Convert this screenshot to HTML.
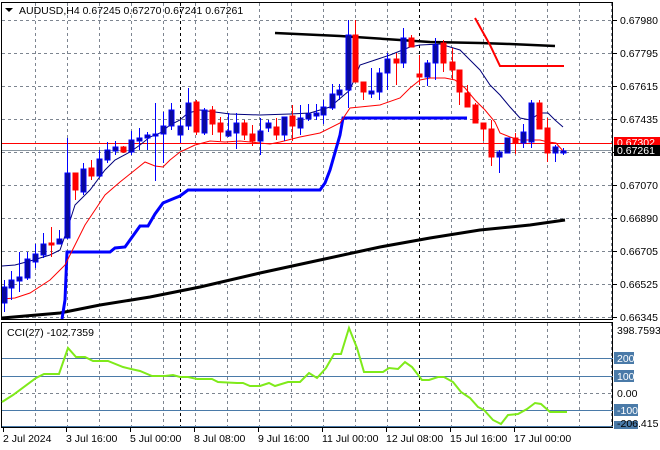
<!DOCTYPE html>
<html><head><meta charset="utf-8"><style>
html,body{margin:0;padding:0;background:#fff;width:660px;height:450px;overflow:hidden}
svg{display:block;font-family:"Liberation Sans",sans-serif;font-size:10.5px}
</style></head><body>
<svg id="s" width="660" height="450" xmlns="http://www.w3.org/2000/svg">
<rect width="660" height="450" fill="#fff"/>
<g id="grid" stroke="#7d8590" stroke-width="1" stroke-dasharray="3,3"></g>
<g fill="none" stroke-width="1">
<line x1="180.5" y1="3" x2="180.5" y2="319" stroke="#000" stroke-dasharray="3,3"/>
<line x1="419.5" y1="3" x2="419.5" y2="319" stroke="#000" stroke-dasharray="3,3"/>
<line x1="180.5" y1="323" x2="180.5" y2="428" stroke="#000" stroke-dasharray="3,3"/>
<line x1="419.5" y1="323" x2="419.5" y2="428" stroke="#000" stroke-dasharray="3,3"/>
</g>
<!-- horizontal price lines -->
<line x1="2" y1="143.5" x2="613" y2="143.5" stroke="#ff0000"/>
<line x1="2" y1="150.5" x2="613" y2="150.5" stroke="#8a96a0"/>
<!-- MA lines -->
<polyline fill="none" stroke="#000" stroke-width="3" points="2,318 60,313 100,305 150,297 200,287 260,273 320,260 380,247 430,238 480,230 530,225 565,220"/>
<polyline fill="none" stroke="#000" stroke-width="2.5" points="275,33 340,36 400,40 430,42 480,43 510,44 555,46"/>
<polyline fill="none" stroke="#ff0000" stroke-width="2" points="475,18 490,45 500,66 564,66"/>
<polyline fill="none" stroke="#0000ff" stroke-width="3" points="62,319 65,300 67,252 110,252 115,248 125,247 130,240 140,226 148,226 155,214 163,203 175,198 180,196 188,190 320,190 325,183 330,170 340,135 343,118 467,118"/>
<polyline fill="none" stroke="#00007a" stroke-width="1" points="2,266 15,265 30,261 50,255 60,250 67,230 75,205 90,190 105,170 115,160 130,152 140,145 150,137 160,133 170,125 180,120 188,113 200,110 230,114 260,115 290,114 310,113 330,107 350,90 360,65 375,60 390,55 410,47 420,45 440,44 460,50 470,60 480,70 490,85 500,95 510,107 520,118 530,120 540,113 548,113 555,120 563,127"/>
<polyline fill="none" stroke="#ff0000" stroke-width="1" points="2,299 15,298 30,293 50,280 60,270 65,265 75,245 85,225 95,210 105,195 120,182 135,170 145,162 155,166 163,167 170,160 180,152 195,145 210,141 225,142 240,141 260,143 270,144 280,142 300,137 320,133 340,123 350,108 360,107 380,105 400,98 410,88 420,80 430,78 445,78 455,80 465,88 475,100 485,110 495,122 500,133 510,137 520,140 540,140 548,142 556,143 564,152"/>
<g id="candles"></g>
<!-- frames -->
<rect x="1.5" y="2.5" width="611" height="317" fill="none" stroke="#000"/>
<rect x="1.5" y="322.5" width="611" height="105" fill="none" stroke="#000"/>
<!-- header -->
<polygon points="5,8 13,8 9,12" fill="#000"/>
<text x="19" y="14" fill="#000">AUDUSD,H4  0.67245 0.67270 0.67241 0.67261</text>
<!-- price axis -->
<g id="axis" fill="#000"></g>
<rect x="614" y="137" width="46" height="11" fill="#ff0000"/>
<text x="617" y="146" fill="#fff">0.67302</text>
<rect x="614" y="145" width="46" height="11" fill="#000"/>
<text x="617" y="154" fill="#fff">0.67261</text>
<!-- CCI -->
<g stroke="#4a7aa8" stroke-width="1">
<line x1="2" y1="358.5" x2="613" y2="358.5"/>
<line x1="2" y1="376.5" x2="613" y2="376.5"/>
<line x1="2" y1="410.5" x2="613" y2="410.5"/>
<line x1="2" y1="426.5" x2="613" y2="426.5"/>
</g>
<line x1="2" y1="393.5" x2="613" y2="393.5" stroke="#7d8590" stroke-dasharray="3,3"/>
<polyline fill="none" stroke="#7fea1a" stroke-width="2" points="2,402 13,395 36,378 44,374 59,374 68,348 76,357 85,357 93,361 108,361 123,367 131,369 140,371 152,376 165,376 173,375 180,377 188,377 197,379 212,379 218,382 237,383 243,383 250,386 260,386 269,383 275,386 288,382 300,382 309,373 317,378 326,368 334,354 341,354 349,328 357,348 364,372 383,372 389,368 398,369 405,362 412,367 422,380 429,380 438,377 444,377 453,382 461,392 470,398 478,407 484,410 493,420 501,424 508,415 518,414 527,409 535,403 541,404 550,412 567,412"/>
<text x="7" y="336" fill="#000">CCI(27) -102.7359</text>
<text x="617" y="334" fill="#000">398.7593</text>
<rect x="614" y="352" width="20" height="12" fill="#4a7aa8"/><text x="617" y="362" fill="#fff">200</text>
<rect x="614" y="370" width="20" height="12" fill="#4a7aa8"/><text x="617" y="380" fill="#fff">100</text>
<text x="617" y="397" fill="#000">0.00</text>
<rect x="614" y="404" width="24" height="12" fill="#4a7aa8"/><text x="617" y="414" fill="#fff">-100</text>
<rect x="614" y="421" width="24" height="8" fill="#4a7aa8"/>
<text x="617" y="427" fill="#000">-206.415</text>
<g id="ticks" stroke="#000"></g>
<g fill="#000">
<text x="3" y="442">2 Jul 2024</text>
<text x="66" y="442">3 Jul 16:00</text>
<text x="130" y="442">5 Jul 00:00</text>
<text x="194" y="442">8 Jul 08:00</text>
<text x="258" y="442">9 Jul 16:00</text>
<text x="322" y="442">11 Jul 00:00</text>
<text x="386" y="442">12 Jul 08:00</text>
<text x="450" y="442">15 Jul 16:00</text>
<text x="514" y="442">17 Jul 00:00</text>
</g>
</svg>
<script>
var NS="http://www.w3.org/2000/svg";
function el(p,t,a){var e=document.createElementNS(NS,t);for(var k in a)e.setAttribute(k,a[k]);p.appendChild(e);return e;}
var g=document.getElementById('grid');
for(var x=35;x<=611;x+=32){el(g,'line',{x1:x+.5,y1:3,x2:x+.5,y2:319});el(g,'line',{x1:x+.5,y1:323,x2:x+.5,y2:427});}
var ys=[20,53,86,119,152,185,218,251,284,317];
ys.forEach(function(y){el(g,'line',{x1:2,y1:y+.5,x2:612,y2:y+.5});});
var ax=document.getElementById('axis');
var labs=["0.67980","0.67795","0.67615","0.67435","","0.67070","0.66890","0.66705","0.66525","0.66345"];
ys.forEach(function(y,i){el(ax,'line',{x1:613,y1:y+.5,x2:617,y2:y+.5,stroke:'#000'});if(labs[i]){var t=el(ax,'text',{x:620,y:y+4});t.textContent=labs[i];}});
var tk=document.getElementById('ticks');
[3,66,130,194,258,322,386,450,514].forEach(function(x){el(tk,'line',{x1:x+.5,y1:428,x2:x+.5,y2:432});});
var C=[[4,287,303,280,312,1],[11,280,288,271,300,1],[19,277,281,252,292,1],[27,259,278,252,280,1],[35,254,262,244,268,1],[43,244,255,233,258,1],[51,243,245,227,257,0],[59,239,244,230,244,1],[67,173,238,138,239,1],[75,173,190,173,200,0],[83,169,192,163,195,1],[91,168,176,160,180,0],[99,159,176,150,178,1],[107,150,160,142,163,1],[115,147,151,141,155,1],[123,147,152,146,153,0],[131,140,152,131,155,1],[139,138,141,128,150,1],[147,135,138,132,150,1],[155,134,136,103,181,1],[163,126,134,112,163,1],[171,110,126,103,130,1],[180,126,135,120,143,1],[188,103,126,88,130,1],[196,102,132,100,135,0],[204,110,133,108,135,1],[212,110,124,106,135,0],[220,123,132,117,141,0],[228,131,136,113,137,1],[236,123,133,113,149,1],[244,123,135,120,140,0],[252,134,141,125,146,0],[260,131,141,118,155,1],[268,123,128,120,132,1],[276,127,135,118,140,0],[284,117,135,117,141,1],[292,116,126,105,141,0],[300,118,128,105,135,1],[308,114,119,104,121,1],[316,113,116,104,120,1],[323,107,115,100,124,1],[332,94,108,84,110,1],[339,90,95,84,100,1],[348,35,90,20,108,1],[355,35,82,20,82,0],[363,82,92,82,100,0],[371,91,94,68,98,1],[379,73,92,68,100,1],[387,59,73,53,90,1],[396,59,63,53,85,0],[403,38,63,28,68,1],[411,38,47,35,47,0],[419,74,77,55,85,0],[427,63,77,60,86,1],[435,45,63,38,80,1],[443,43,63,40,72,0],[452,62,70,48,80,0],[459,70,92,70,105,0],[467,93,107,85,105,0],[475,105,123,103,123,0],[483,123,129,123,141,0],[491,129,157,120,166,0],[499,152,157,150,173,1],[507,138,153,138,153,1],[515,138,143,133,154,0],[523,132,143,124,148,1],[531,103,142,100,148,1],[539,103,129,100,129,0],[547,128,153,118,162,0],[555,147,153,145,162,1],[563,151,153,148,155,1]];
var cg=document.getElementById('candles');
C.forEach(function(c){var col=c[5]?'#0000ff':'#ff0000';var fill=c[5]?'#0a0a9a':'#ff0000';
el(cg,'line',{x1:c[0]+.5,y1:c[3],x2:c[0]+.5,y2:c[4],stroke:col});
el(cg,'rect',{x:c[0]-2,y:c[1],width:5,height:Math.max(1,c[2]-c[1]),fill:fill,stroke:col,'stroke-width':1});});
</script>
</body></html>
